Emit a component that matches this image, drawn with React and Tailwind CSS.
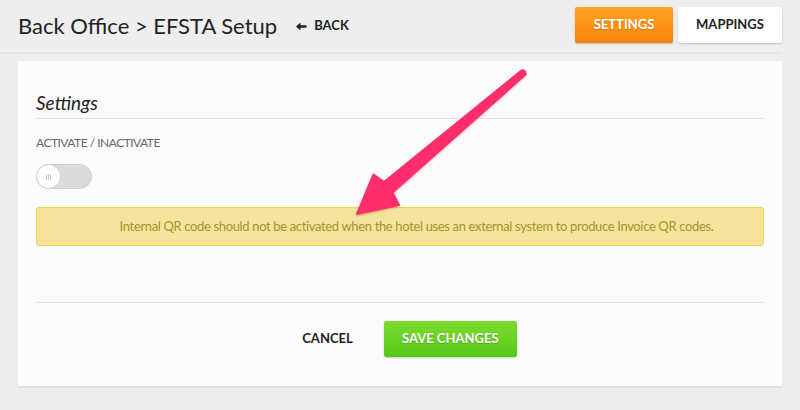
import React from "react";

function Arrow() {
    return (
        <svg className="absolute left-0 top-0 pointer-events-none" width="800" height="410" viewBox="0 0 800 410">
            <defs>
                <filter id="sh" x="-20%" y="-20%" width="140%" height="140%">
                    <feDropShadow dx="0" dy="1" stdDeviation="1.2" floodColor="#000" floodOpacity="0.25" />
                </filter>
            </defs>
            <path
                d="M521.5 70.5 Q525.5 69.5 525.5 74.5 L392.5 192.5 L399 205 L357 214 L373.5 174.5 L384 182 Z"
                fill="#fe2f6b"
                stroke="#fe2f6b"
                strokeWidth="2"
                strokeLinejoin="round"
                filter="url(#sh)"
            />
        </svg>
    );
}

function BackIcon() {
    return (
        <svg width="11" height="9" viewBox="0 0 11 9">
            <path d="M0 4.5 L4.5 0.5 L4.5 3.3 L10.5 3.3 L10.5 5.7 L4.5 5.7 L4.5 8.5 Z" fill="#222" />
        </svg>
    );
}

export default function App() {
    return (
        <div className="relative w-[800px] h-[410px] bg-[#eeeeee] overflow-hidden" style={{ fontFamily: "Lato, 'Open Sans', sans-serif" }}>
            <div className="flex items-center justify-between pl-[18px] h-[54px] border-b-[2px] border-[#e4e4e4] mr-[18px]">
                <div className="flex items-center">
                    <div className="text-[22px] text-[#222] leading-none">Back Office &gt; EFSTA Setup</div>
                    <div className="ml-[19px] flex items-center gap-[7px] text-[13px] font-bold text-[#222]">
                        <BackIcon />
                        <span>BACK</span>
                    </div>
                </div>
                <div className="flex gap-[5px] self-start mt-[7px]">
                    <div className="w-[98px] h-[36px] rounded-[2px] bg-gradient-to-b from-[#ffa21f] to-[#f7860a] text-white text-[13px] font-bold flex items-center justify-center shadow-[0_1px_2px_rgba(0,0,0,0.2)] [text-shadow:0_1px_1px_rgba(0,0,0,0.2)]">
                        SETTINGS
                    </div>
                    <div className="w-[104px] h-[36px] rounded-[2px] bg-white text-[#222] text-[13px] font-bold flex items-center justify-center shadow-[0_1px_2px_rgba(0,0,0,0.2)]">
                        MAPPINGS
                    </div>
                </div>
            </div>

            <div className="mx-[18px] mt-[7px] h-[325px] bg-[#fcfcfc] shadow-[0_1px_2px_rgba(0,0,0,0.1)] px-[18px] pt-[30px] flex flex-col">
                <div className="text-[19px] leading-[24px] italic text-[#222] pb-[3px] border-b border-[#e2e2e2]">Settings</div>
                <div className="mt-[15px] text-[12px] leading-[18px] tracking-[-0.5px] text-[#666]">ACTIVATE / INACTIVATE</div>
                <div className="mt-[12px] w-[56px] h-[25px] rounded-full bg-[#dadada] border border-[#d0d0d0] relative">
                    <div className="absolute left-[-1px] top-[-1px] w-[25px] h-[25px] rounded-full bg-white border border-[#d0d0d0] flex items-center justify-center gap-[1px]">
                        <span className="w-[1px] h-[6px] bg-[#ccc]"></span>
                        <span className="w-[1px] h-[6px] bg-[#ccc]"></span>
                        <span className="w-[1px] h-[6px] bg-[#ccc]"></span>
                    </div>
                </div>
                <div className="mt-[18px] h-[39px] rounded-[3px] bg-[#f4e49b] border border-[#f0d54c] text-[#a8922c] text-[13px] tracking-[-0.35px] pl-[33px] flex items-center justify-center">
                    Internal QR code should not be activated when the hotel uses an external system to produce Invoice QR codes.
                </div>
                <div className="mt-[56px] border-t border-[#e2e2e2]"></div>
                <div className="mt-[18px] pl-[19px] flex items-center justify-center gap-[31px]">
                    <div className="text-[13px] font-bold text-[#222]">CANCEL</div>
                    <div className="w-[133px] h-[36px] rounded-[2px] bg-gradient-to-b from-[#7cdc2c] to-[#54c81a] text-white text-[13px] font-bold flex items-center justify-center shadow-[0_1px_2px_rgba(0,0,0,0.2)] [text-shadow:0_1px_1px_rgba(0,0,0,0.2)]">
                        SAVE CHANGES
                    </div>
                </div>
            </div>

            <Arrow />
        </div>
    );
}
